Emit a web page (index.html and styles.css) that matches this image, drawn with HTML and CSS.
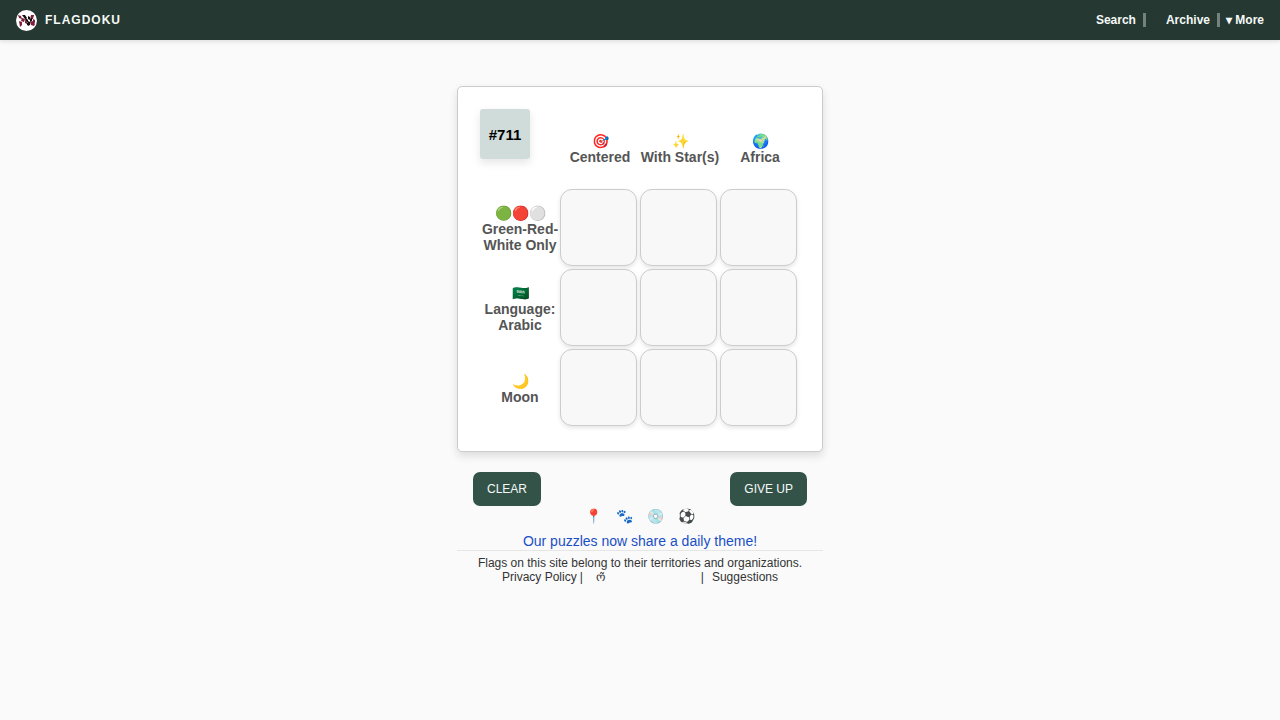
FILE: index.html
```html
<!DOCTYPE html>
<html lang="en">
<head>
    <meta charset="UTF-8">
    <meta name="viewport" content="width=device-width, initial-scale=1.0">
    <title>Flagdoku</title>
    <link rel="stylesheet" href="styles.css">
</head>
<body>
    <header class="navbar">
        <a class="brand" href="#">
            <svg class="logo" viewBox="0 0 21 21" aria-hidden="true">
                <circle cx="10.5" cy="10.5" r="10.5" fill="#fff"/>
                <g fill="#7d1f3c">
                    <path d="M2 5l3 1 1 3-3-1zM6 8l3 1-1 3-3-1zM3 11l3 1v3l-2 2zM15 5l3 0-1 4-3 1zM17 9l2 1v3l-2-1zM14 12l3-1 2 3-1 2-3-1zM9 10l2 2v2l-2-1z"/>
                </g>
                <g fill="#15100f">
                    <path d="M6 5l3 0 2 3-2 1zM10 8l2 2v3l-3-3zM12 6l2 1v3l-2-1zM12 11l2 1v3l-3-2zM14 9l2-1v3l-2 1zM11 13l3 1-1 2-2-1z"/>
                </g>
            </svg>
            <span>FLAGDOKU</span>
        </a>
        <nav class="menu">
            <a class="search" href="#">Search</a>
            <span class="divider"></span>
            <a class="archive" href="#">Archive</a>
            <span class="divider"></span>
            <a class="more" href="#">▾ More</a>
        </nav>
    </header>

    <main class="container">
        <div class="board">
            <div class="corner"><span class="puzzle-number">#711</span></div>
            <div class="label">🎯<br>Centered</div>
            <div class="label">✨<br>With Star(s)</div>
            <div class="label">🌍<br>Africa</div>

            <div class="label">🟢🔴⚪<br>Green-Red-White Only</div>
            <button class="cell" aria-label="Row 1, Centered"></button>
            <button class="cell" aria-label="Row 1, With Star(s)"></button>
            <button class="cell" aria-label="Row 1, Africa"></button>

            <div class="label">🇸🇦<br>Language: Arabic</div>
            <button class="cell" aria-label="Row 2, Centered"></button>
            <button class="cell" aria-label="Row 2, With Star(s)"></button>
            <button class="cell" aria-label="Row 2, Africa"></button>

            <div class="label">🌙<br>Moon</div>
            <button class="cell" aria-label="Row 3, Centered"></button>
            <button class="cell" aria-label="Row 3, With Star(s)"></button>
            <button class="cell" aria-label="Row 3, Africa"></button>
        </div>

        <div class="actions">
            <button class="btn">CLEAR</button>
            <button class="btn">GIVE UP</button>
        </div>

        <div class="games">
            <a href="#">📍</a>
            <a href="#">🐾</a>
            <a href="#">💿</a>
            <a href="#">⚽</a>
        </div>
        <a class="theme-link" href="#">Our puzzles now share a daily theme!</a>

        <footer class="footer">
            <p>Flags on this site belong to their territories and organizations.</p>
            <div class="footer-links">
                <a href="#">Privacy Policy</a>
                <span>|</span>
                <a class="mark" href="#">ო̃</a>
                <span>|</span>
                <a class="suggestions" href="#">Suggestions</a>
            </div>
        </footer>
    </main>
</body>
</html>
```
FILE: styles.css
```css
* {
    box-sizing: border-box;
    margin: 0;
    padding: 0;
}

body {
    background-color: #fafafa;
    font-family: "Liberation Sans", Arial, sans-serif;
    color: #333;
}

a {
    color: inherit;
    text-decoration: none;
}

.navbar {
    display: flex;
    justify-content: space-between;
    align-items: center;
    height: 40px;
    padding: 0 16px;
    background-color: #263832;
    color: #f5faf8;
    font-weight: bold;
    box-shadow: 0 2px 4px rgba(0, 0, 0, 0.1);
}

.brand {
    display: flex;
    align-items: center;
    gap: 8px;
    font-size: 12px;
    letter-spacing: 1px;
}

.logo {
    width: 21px;
    height: 21px;
}

.menu {
    display: flex;
    align-items: center;
    font-size: 12px;
}

.divider {
    width: 3px;
    height: 14px;
    margin: 0 6px 0 7px;
    background-color: #74827d;
}

.archive {
    margin-left: 14px;
}

.container {
    width: 366px;
    max-width: 100%;
    margin: 46px auto 0;
    text-align: center;
}

.board {
    display: grid;
    grid-template-columns: repeat(4, 80px);
    grid-auto-rows: 80px;
    padding: 22px;
    background-color: #fff;
    border: 1px solid #ccc;
    border-radius: 5px;
    box-shadow: 0 4px 8px rgba(0, 0, 0, 0.12);
}

.puzzle-number {
    display: flex;
    align-items: center;
    justify-content: center;
    width: 50px;
    height: 50px;
    background-color: #d0dcd9;
    border-radius: 3px;
    color: #000;
    font-size: 15px;
    font-weight: bold;
    box-shadow: 0 4px 8px rgba(0, 0, 0, 0.1);
}

.label {
    align-self: center;
    color: #555;
    font-size: 14px;
    font-weight: bold;
    line-height: 16px;
}

.cell {
    width: 77px;
    height: 77px;
    background-color: #f8f8f8;
    border: 1px solid #ccc;
    border-radius: 12px;
    box-shadow: 0 2px 4px rgba(0, 0, 0, 0.1);
    cursor: pointer;
}

.actions {
    display: flex;
    justify-content: space-between;
    margin: 20px 16px 0;
}

.btn {
    height: 34px;
    padding: 0 14px;
    background-color: #335348;
    border: none;
    border-radius: 7px;
    color: #f5faf8;
    font-family: inherit;
    font-size: 12px;
    cursor: pointer;
}

.games {
    display: flex;
    justify-content: center;
    gap: 14px;
    font-size: 14px;
    line-height: 20px;
}

.theme-link {
    display: block;
    margin-top: 6px;
    color: #1a4fc4;
    font-size: 14px;
    line-height: 18px;
}

.footer {
    padding-top: 5px;
    border-top: 1px solid #e6e6e6;
    font-size: 12px;
    line-height: 14px;
}

.footer-links {
    display: flex;
    justify-content: center;
    gap: 3px;
}

.mark {
    width: 112px;
    padding-left: 10px;
    text-align: left;
}

.suggestions {
    padding-left: 5px;
}
```
